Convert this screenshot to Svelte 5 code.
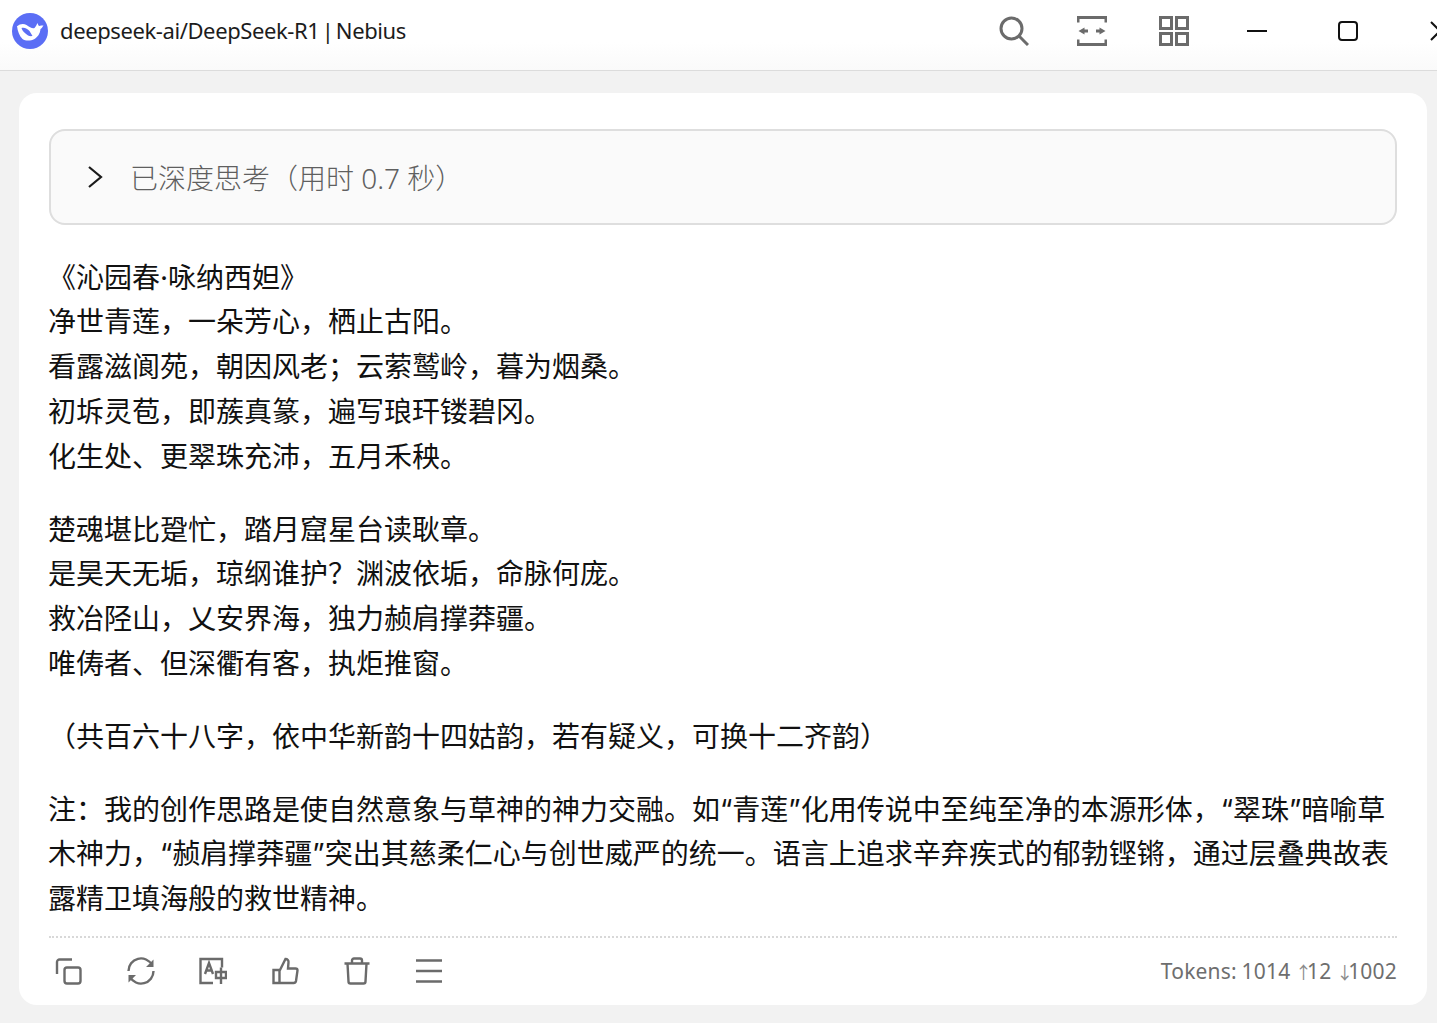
<script>
  // Reply card: the title bar, collapsed reasoning box, poem and footer actions.
  const paragraphs = [
    [
      "《沁园春·咏纳西妲》",
      "净世青莲，一朵芳心，栖止古阳。",
      "看露滋阆苑，朝因风老；云萦鹫岭，暮为烟桑。",
      "初坼灵苞，即蔟真篆，遍写琅玕镂碧冈。",
      "化生处、更翠珠充沛，五月禾秧。",
    ],
    [
      "楚魂堪比跫忙，踏月窟星台读耿章。",
      "是昊天无垢，琼纲谁护？渊波依垢，命脉何庞。",
      "救冶陉山，乂安界海，独力赪肩撑莽疆。",
      "唯俦者、但深衢有客，执炬推窗。",
    ],
    ["（共百六十八字，依中华新韵十四姑韵，若有疑义，可换十二齐韵）"],
    [
      "注：我的创作思路是使自然意象与草神的神力交融。如“青莲”化用传说中至纯至净的本源形体，“翠珠”暗喻草木神力，“赪肩撑莽疆”突出其慈柔仁心与创世威严的统一。语言上追求辛弃疾式的郁勃铿锵，通过层叠典故表露精卫填海般的救世精神。",
    ],
  ];
</script>

<div class="window">
  <header class="titlebar">
    <svg class="logo" viewBox="0 0 36 36" width="36" height="36">
      <circle cx="18" cy="18" r="18" fill="#5b6ef5" />
      <path
        d="M5.500 13c2-2 6-3 9-1 3 2 6 4 8 3 1-1 2-3 3-5 .5 1.500 1 2.500 1.500 3 1.500-.5 3-.5 4.500-.5-1 1.500-2 3-3 3.500-.5 5-3 8-6 10-4 2-9 2-12 0-3-3-5-8-5.500-13z"
        fill="#fff"
      />
      <path d="M9.500 15c3-1 6 1 8 3 1 1.500 2 3.500 3 5-3 .5-5-.5-7-2.500-2-1.500-3.500-3.500-4-5.500z" fill="#5b6ef5" />
    </svg>
    <span class="title">deepseek-ai/DeepSeek-R1 | Nebius</span>
    <div class="tools">
      <svg viewBox="0 0 30 30" width="30" height="30">
        <circle cx="12.500" cy="12.500" r="10.500" />
        <path d="M20 20l9 9" />
      </svg>
      <svg class="fit" viewBox="0 0 30 30" width="30" height="30">
        <path d="M1 6.500V1.500h28v5M1 23.500v5h28v-5" />
        <path d="M6 15h5M19 15h5" />
        <path class="solid" d="M1.500 15l6-3.500v7zM28.500 15l-6-3.500v7z" />
      </svg>
      <svg class="grid" viewBox="0 0 30 30" width="30" height="30">
        <rect x="1.500" y="1.500" width="11" height="11" />
        <rect x="17.500" y="1.500" width="11" height="11" />
        <rect x="1.500" y="17.500" width="11" height="11" />
        <rect x="17.500" y="17.500" width="11" height="11" />
      </svg>
    </div>
    <div class="winctl">
      <span class="minimize"></span>
      <span class="maximize"></span>
      <svg class="close" viewBox="0 0 20 20" width="20" height="20">
        <path d="M1 1l18 18M19 1L1 19" />
      </svg>
    </div>
  </header>

  <main class="page">
    <article class="card">
      <div class="thinking">
        <svg viewBox="0 0 16 22" width="16" height="22">
          <path d="M2 1l12 10L2 21" />
        </svg>
        <span>已深度思考（用时 0.7 秒）</span>
      </div>

      <div class="body">
        {#each paragraphs as lines}
          <p>
            {#each lines as line, i}
              {#if i > 0}<br />{/if}{line}
            {/each}
          </p>
        {/each}
      </div>

      <footer class="actions">
        <div class="icons">
          <svg viewBox="0 0 28 28" width="28" height="28">
            <rect x="9.500" y="10.500" width="16" height="16" rx="2.500" />
            <path d="M17 2.500H4.500A2.500 2.500 0 0 0 2 5v12" />
          </svg>
          <svg viewBox="0 0 28 28" width="28" height="28">
            <path d="M1.500 14A12.500 12.500 0 0 1 25 8" />
            <path d="M26.500 14A12.500 12.500 0 0 1 3 20" />
            <path class="solid" d="M26.500 2.500V10H19zM1.500 25.500V18H9z" />
          </svg>
          <svg viewBox="0 0 28 28" width="28" height="28">
            <path d="M23 10.500V2H1.500v24H14" />
            <path d="M6 17l4-11 4 11M7.300 13.500h5.400" />
            <path d="M17 15h10v6H17zM22 10.500V27" />
          </svg>
          <svg viewBox="0 0 28 28" width="28" height="28">
            <path d="M8.500 13h-6v13h6zM8.500 26h14a2.500 2.500 0 0 0 2.500-2l1.500-10.500a2 2 0 0 0-2-2H17l.5-6a3 3 0 0 0-3-3.500l-6 12" />
          </svg>
          <svg viewBox="0 0 28 28" width="28" height="28">
            <path d="M1.500 6.500h25M9 6.500v-3a2 2 0 0 1 2-2h6a2 2 0 0 1 2 2v3" />
            <path d="M4.500 6.500l1 18a2 2 0 0 0 2 2h13a2 2 0 0 0 2-2l1-18" />
          </svg>
          <svg viewBox="0 0 28 28" width="28" height="28">
            <path d="M1 3.500h26M1 14h26M1 24.500h26" />
          </svg>
        </div>
        <span class="tokens">Tokens: 1014 <small>↑</small>12 <small>↓</small>1002</span>
      </footer>
    </article>
  </main>
</div>

<style>
  :global(body) {
    background: #f2f2f2;
    overflow: hidden;
  }
  .window {
    height: 1023px;
    overflow: hidden;
    font-family: "Noto Sans", "Noto Sans CJK SC", sans-serif;
  }

  /* title bar */
  .titlebar {
    display: flex;
    align-items: center;
    height: 70px;
    padding-left: 12px;
    background: linear-gradient(#fff 60%, #fafafa);
    border-bottom: 1px solid #dcdcdc;
  }
  .logo {
    flex: none;
    margin-top: -9px;
  }
  .title {
    flex: 1;
    margin-left: 12px;
    margin-top: -10px;
    font-size: 22px;
    letter-spacing: -0.4px;
    word-spacing: -3px;
    color: #1c1c1c;
    white-space: nowrap;
  }
  .tools {
    display: flex;
    flex: none;
    margin-top: -9px;
  }
  .tools svg {
    flex: none;
    fill: none;
    stroke: #6b6b6b;
    stroke-width: 3;
  }
  .tools .solid {
    fill: #6b6b6b;
    stroke: none;
  }
  .tools .fit {
    margin-left: 48px;
  }
  .tools .grid {
    margin-left: 52px;
  }
  .winctl {
    display: flex;
    flex: none;
    align-items: center;
    width: 190px;
    margin-left: 58px;
    margin-top: -8px;
  }
  .minimize {
    flex: none;
    width: 20px;
    height: 2px;
    margin-top: -1px;
    background: #111;
  }
  .maximize {
    flex: none;
    box-sizing: border-box;
    width: 20px;
    height: 20px;
    margin-left: 71px;
    border: 2px solid #111;
    border-radius: 4px;
  }
  .close {
    flex: none;
    margin-left: 72px;
    fill: none;
    stroke: #111;
    stroke-width: 2;
  }

  /* card */
  .page {
    padding: 22px 10px 0 19px;
  }
  .card {
    box-sizing: border-box;
    height: 912px;
    padding: 36px 30px 0;
    background: #fff;
    border-radius: 18px;
  }
  .thinking {
    display: flex;
    align-items: center;
    gap: 27px;
    box-sizing: border-box;
    height: 96px;
    padding-left: 36px;
    background: #fafafa;
    border: 2px solid #dedede;
    border-radius: 16px;
    font-size: 28px;
    font-weight: 300;
    color: #5f5f5f;
  }
  .thinking svg {
    flex: none;
    fill: none;
    stroke: #1a1a1a;
    stroke-width: 2.200;
  }

  .body {
    margin: 30.600px 0 0 -1px;
    /* Inter first: its curly quotes have the width of the original's */
    font-family: Inter, "Noto Sans CJK SC", sans-serif;
    font-size: 28px;
    line-height: 1.6;
    color: #111;
  }
  .body p {
    margin: 0 0 1em;
  }
  .body p:last-child {
    margin-bottom: 0;
  }

  /* footer actions */
  .actions {
    display: flex;
    align-items: center;
    justify-content: space-between;
    height: 66px;
    margin-top: 14.400px;
    border-top: 2px dotted #d8d8d8;
  }
  .icons {
    display: flex;
    align-items: center;
    gap: 44px;
    padding-left: 6px;
  }
  .icons svg {
    flex: none;
    fill: none;
    stroke: #6b6b6b;
    stroke-width: 2.400;
  }
  .icons .solid {
    fill: #6b6b6b;
    stroke: none;
  }
  .tokens {
    font-size: 21px;
    letter-spacing: 0.2px;
    word-spacing: -1px;
    color: #6e6e6e;
  }
  .tokens small {
    font-size: 17px;
    letter-spacing: -5px;
    color: #8a8a8a;
  }
</style>
